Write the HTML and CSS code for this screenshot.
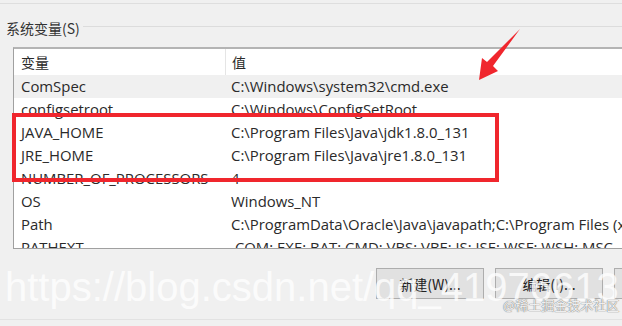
FILE: index.html
```html
<!DOCTYPE html>
<html lang="zh-CN">
<head>
    <meta charset="UTF-8">
    <title>系统变量</title>
    <link rel="stylesheet" href="styles.css">
</head>
<body>
    <div class="window">
        <div class="top-line"></div>

        <div class="group-title">
            <span>系统变量(S)</span>
            <div class="group-rule"></div>
        </div>

        <div class="list">
            <div class="row head">
                <div class="c1">变量</div>
                <div class="c2">值</div>
            </div>
            <div class="row selected">
                <div class="c1">ComSpec</div>
                <div class="c2">C:\Windows\system32\cmd.exe</div>
            </div>
            <div class="row">
                <div class="c1">configsetroot</div>
                <div class="c2">C:\Windows\ConfigSetRoot</div>
            </div>
            <div class="row">
                <div class="c1">JAVA_HOME</div>
                <div class="c2">C:\Program Files\Java\jdk1.8.0_131</div>
            </div>
            <div class="row">
                <div class="c1">JRE_HOME</div>
                <div class="c2">C:\Program Files\Java\jre1.8.0_131</div>
            </div>
            <div class="row">
                <div class="c1">NUMBER_OF_PROCESSORS</div>
                <div class="c2">4</div>
            </div>
            <div class="row">
                <div class="c1">OS</div>
                <div class="c2">Windows_NT</div>
            </div>
            <div class="row">
                <div class="c1">Path</div>
                <div class="c2">C:\ProgramData\Oracle\Java\javapath;C:\Program Files (x86)\Intel</div>
            </div>
            <div class="row">
                <div class="c1">PATHEXT</div>
                <div class="c2">.COM;.EXE;.BAT;.CMD;.VBS;.VBE;.JS;.JSE;.WSF;.WSH;.MSC</div>
            </div>
        </div>

        <div class="buttons">
            <button class="btn">新建(W)...</button>
            <button class="btn">编辑(I)...</button>
            <button class="btn">删除(L)</button>
        </div>

        <div class="bottom-line"></div>

        <!-- annotations drawn over the screenshot -->
        <div class="mark-box"></div>
        <svg class="mark-arrow" width="60" height="60" viewBox="470 25 60 60">
            <polygon points="520,29 493,66 498,71 479,80 482,58 487,62" fill="#f0262d"/>
        </svg>

        <div class="watermark">https://blog.csdn.net/qq_41976613</div>
        <div class="juejin">@稀土掘金技术社区</div>
    </div>
</body>
</html>
```

FILE: styles.css
```css
* {
    margin: 0;
    padding: 0;
    box-sizing: border-box;
}

body {
    background: #f0f0f0;
    font-family: 'Open Sans', 'Noto Sans CJK SC', sans-serif;
    font-size: 14.9px;
    color: #2a2a2a;
    overflow: hidden;
}

.window {
    position: relative;
    width: 622px;
    height: 326px;
    overflow: hidden;
}

.top-line {
    height: 1px;
    margin-top: 3px;
    background: #dedede;
}

.group-title {
    display: flex;
    align-items: center;
    height: 20px;
    margin-top: 14px;
    padding-left: 6px;
}

.group-title span {
    font-family: 'Noto Sans CJK SC', sans-serif;
    font-size: 14px;
    line-height: 20px;
    color: #333;
}

.group-rule {
    flex: 1;
    height: 1px;
    margin-left: 3px;
    margin-top: -4px;
    background: #dcdcdc;
}

.list {
    margin: 9px 0 0 13px;
    width: 640px;
    height: 202px;
    background: #fff;
    border: 1px solid #a0a0a0;
    border-top: 2px solid #b4b4b4;
    overflow: hidden;
}

.row {
    display: flex;
    height: 23px;
    line-height: 23px;
    white-space: nowrap;
}

.row.head {
    height: 26px;
    line-height: 26px;
    font-family: 'Noto Sans CJK SC', sans-serif;
    font-size: 14px;
}

.row.selected {
    background: #f0f0f0;
}

.c1 {
    width: 211px;
    padding-left: 7px;
    flex-shrink: 0;
}

.c2 {
    padding-left: 6px;
}

.head .c2 {
    border-left: 1px solid #e5e5e5;
}

.buttons {
    display: flex;
    gap: 11px;
    margin: 19px 0 0 376px;
}

.btn {
    flex-shrink: 0;
    width: 108px;
    height: 31px;
    background: #e1e1e1;
    border: 1px solid #adadad;
    font-family: 'Noto Sans CJK SC', sans-serif;
    font-size: 14px;
    color: #222;
}

.bottom-line {
    height: 1px;
    margin-top: 20px;
    background: #e2e2e2;
}

.mark-box {
    position: absolute;
    left: 12px;
    top: 113px;
    width: 487px;
    height: 69px;
    border: 4px solid #f0262d;
}

.mark-arrow {
    position: absolute;
    left: 470px;
    top: 25px;
}

.watermark {
    position: absolute;
    left: 5px;
    top: 265px;
    font-family: 'Liberation Sans', sans-serif;
    font-size: 40px;
    color: rgba(255, 255, 255, 0.78);
    white-space: nowrap;
}

.juejin {
    position: absolute;
    left: 503px;
    top: 295px;
    font-family: 'Noto Sans CJK SC', sans-serif;
    font-size: 13px;
    color: rgba(255, 255, 255, 0.9);
    text-shadow: 0 0 1px #777, 0 0 1px #777;
    white-space: nowrap;
}
```
